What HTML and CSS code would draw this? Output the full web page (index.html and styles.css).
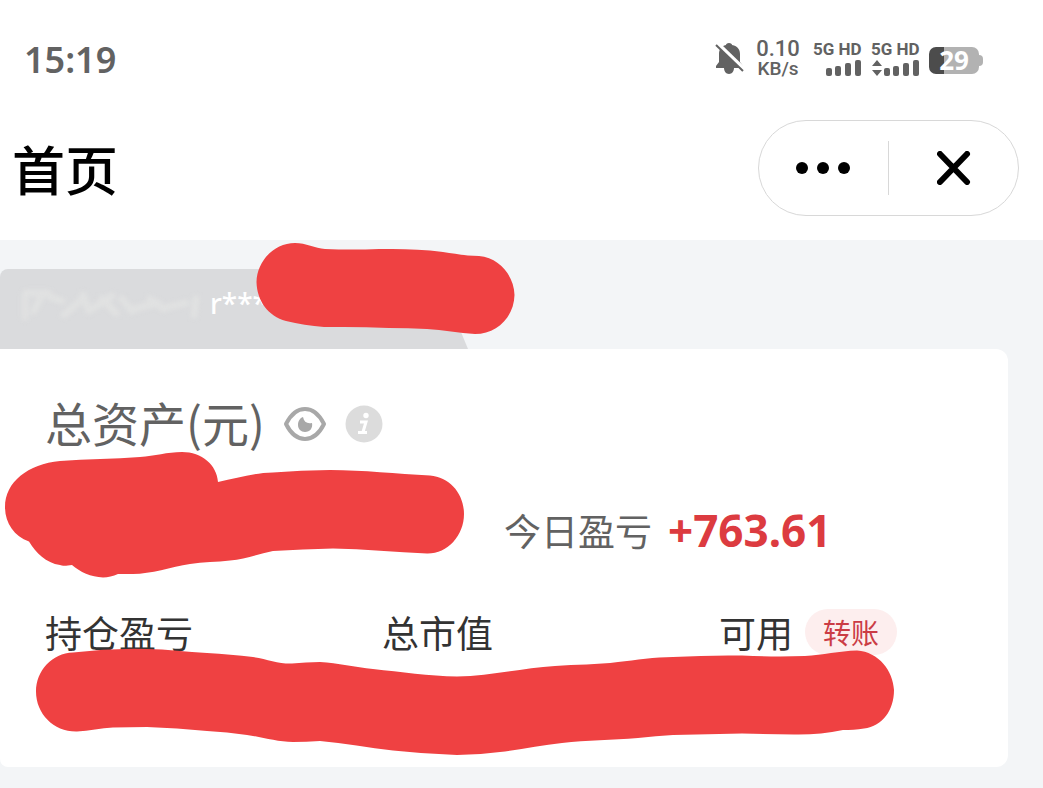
FILE: index.html
```html
<!DOCTYPE html>
<html lang="zh-CN">
<head>
<meta charset="utf-8">
<meta name="viewport" content="width=device-width, initial-scale=1">
<title>首页</title>
<link rel="stylesheet" href="styles.css">
</head>
<body>
<div class="status">
  <time class="clock">15:19</time>
  <div class="indicators">
    <svg class="bell" viewBox="0 0 30 32" aria-hidden="true">
      <path d="M14 0c2 0 3 1 3 2 6 1 8 5 8 9v8l3 4v2H19c0 3-2 6-5 6s-5-3-5-6H1v-2l3-4v-8c0-4 2-8 7-9 0-1 1-2 3-2z" fill="#626262"/>
      <path d="M1 -1l29 28" stroke="#fff" stroke-width="4"/>
      <path d="M1 2l27 26" stroke="#626262" stroke-width="2"/>
    </svg>
    <div class="speed"><span class="speed-value">0.10</span><span class="speed-unit">KB/s</span></div>
    <div class="sim">
      <span class="sim-label">5G HD</span>
      <svg class="bars" viewBox="0 0 48 18" aria-hidden="true"><g fill="#626262"><rect x="13" y="9" width="6" height="8" rx="2"/><rect x="22" y="7" width="6" height="10" rx="2"/><rect x="32" y="4" width="6" height="13" rx="2"/><rect x="42" y="1" width="6" height="16" rx="2"/></g></svg>
    </div>
    <div class="sim">
      <span class="sim-label">5G HD</span>
      <svg class="bars" viewBox="0 0 48 18" aria-hidden="true"><g fill="#626262"><path d="M6 1l5 6H1zM6 17l5-6H1z"/><rect x="13" y="9" width="6" height="8" rx="2"/><rect x="22" y="7" width="6" height="10" rx="2"/><rect x="32" y="4" width="6" height="13" rx="2"/><rect x="42" y="1" width="6" height="16" rx="2"/></g></svg>
    </div>
    <div class="battery">29</div>
  </div>
</div>

<header class="nav">
  <h1 class="page-title">首页</h1>
  <div class="capsule">
    <button class="capsule-button" type="button" aria-label="更多"><svg class="dots" viewBox="0 0 56 14"><circle cx="6" cy="7" r="6"/><circle cx="27" cy="7" r="6"/><circle cx="48" cy="7" r="6"/></svg></button>
    <button class="capsule-button" type="button" aria-label="关闭"><svg class="close" viewBox="0 0 34 34"><path d="M3 3l27 28M30 3l-27 28"/></svg></button>
  </div>
</header>

<main class="content">
  <div class="account">
    <div class="account-tab">
      <svg class="smudge" viewBox="0 0 190 44" aria-hidden="true"><g fill="none" stroke="#e0e1e1" stroke-width="7" stroke-linecap="round"><path d="M6 8h22M5 10v22M22 10l-8 16M30 12l12 4M44 30l16-14M63 10l6 16M72 24l20-13M82 14l14 14M102 14l10 12M114 24l24-6M130 14l14 10M148 22l18-4M176 14l-2 16"/></g></svg>
      <span class="account-mask">r****</span>
    </div>
    <svg class="stroke stroke-account" viewBox="250 240 270 100" aria-hidden="true"><path d="M256.500 282C257 261 274 243 295 243C306 243 315 248 325 249Q352 250 379 249C397 249 413 249 430 250.500C448 252 463 256 479 256C500 258 514 276 514.500 295C514 317 497 334 475 334C459 333 443 330 427 329Q408 328 389 328Q366 327 344 327H324C311 326 298 324 286 321C268 316 257 301 256.500 282Z"/></svg>
  </div>

  <section class="card">
    <div class="assets">
      <h2 class="assets-title">总资产(元)</h2>
      <button class="icon-button" type="button" aria-label="显示金额"><svg class="eye" viewBox="0 0 44 38"><path d="M3 19C8 9 14 4 22 4s14 5 19 15C36 29 30 34 22 34S8 29 3 19z" fill="none" stroke="#a8a8a8" stroke-width="4" stroke-linejoin="round"/><path d="M20 12c1 5 4 7 9 6 1 5-2 9-7 9-4 0-7-3-7-7s2-7 5-8z" fill="#a8a8a8"/></svg></button>
      <button class="icon-button" type="button" aria-label="说明"><svg class="info" viewBox="0 0 38 38"><circle cx="19" cy="19" r="18.500" fill="#dcdcdc"/><circle cx="21" cy="10.500" r="2.700" fill="#fff"/><path d="M15 17h6l-3 10M13 27.500h9" fill="none" stroke="#fff" stroke-width="3"/></svg></button>
    </div>
    <div class="today">
      <span class="today-label">今日盈亏</span>
      <span class="today-value">+763.61</span>
    </div>
    <div class="holdings">
      <span>持仓盈亏</span>
      <span>总市值</span>
      <div class="available"><span>可用</span><button class="transfer" type="button">转账</button></div>
    </div>
    <svg class="stroke stroke-assets" viewBox="0 445 470 140" aria-hidden="true"><path d="M5 507C5 482 28 464 60 461C87 459 114 459 140 457C155 456 167 452 182 452C202 452 217 465 218 482C237 478 253 473 273 472.500Q301 470 330 470C364 470 396 474 430 475.500C450 477 464 494 464 514C464 536 447 554 427 553.500C396 552 364 549 333 548.500Q303 549 273 551C258 554 245 559 230 560.500C217 562 203 562 190 564C171 567 151 574 133 574H118C113 576 108 577.500 103 577.500C91 577 80 572 72 565C66 566 62 566 60 565C46 563 36 553 29 541.500C14 536 5 523 5 507Z"/></svg>
    <svg class="stroke stroke-holdings" viewBox="30 645 870 115" aria-hidden="true"><path d="M36 691.500C36 671 52 653 73 652.500Q110 648 147 649C167 649 187 652 207 653C223 654 238 655 253 657C267 659 279 664 292 663.500Q306 662 320 662C338 663 355 667 373 669C401 672 429 676 457 676.500C491 676 522 668 555 666C576 664 597 665 618 662C636 660 655 657 673 657Q708 655 742 655.500Q774 657 805 656C823 655 839 651 857 650.500C879 652 893 671 894 690C894 710 883 726 864 728.500C857 730 850 730 843 730Q819 735 794 734.500Q768 734 742 733.500Q708 734 673 735Q656 736 638 738C612 740 587 740 562 743C541 745 521 750 500 752Q478 755 457 755Q425 754 393 750.500C369 748 344 743 320 741Q306 742 293 742C277 742 262 737 247 735Q227 732 207 731Q177 728 147 727Q130 727 113 727.500C101 728 89 731 77 731.500C54 732 36 714 36 691.500Z"/></svg>
  </section>
</main>
</body>
</html>
```
FILE: styles.css
```css
* {
  box-sizing: border-box;
}

body {
  margin: 0;
  min-height: 100vh;
  display: flex;
  flex-direction: column;
  background: #fff;
  color: #333;
  font-family: "Noto Sans CJK SC", sans-serif;
}

svg {
  display: block;
}

button {
  margin: 0;
  padding: 0;
  border: 0;
  background: none;
  font: inherit;
  color: inherit;
}

.status {
  display: flex;
  align-items: center;
  justify-content: space-between;
  height: 120px;
  padding: 0 60px 2px 24px;
  color: #626262;
  font-family: Roboto, sans-serif;
  font-weight: 600;
}

.clock {
  font-family: "Noto Sans", sans-serif;
  font-size: 36px;
}

.indicators {
  display: flex;
  align-items: center;
  gap: 10px;
}

.bell {
  width: 30px;
  height: 32px;
}

.speed {
  display: flex;
  flex-direction: column;
  width: 46px;
  margin-right: 2px;
  text-align: center;
}

.speed-value {
  font-size: 22px;
  line-height: 20px;
  font-weight: 500;
}

.speed-unit {
  font-size: 19px;
  line-height: 20px;
  font-weight: 500;
}

.sim {
  display: flex;
  flex-direction: column;
  gap: 2px;
  width: 48px;
}

.sim-label {
  font-size: 17px;
  line-height: 16px;
  font-weight: 700;
  white-space: nowrap;
}

.bars {
  width: 48px;
  height: 18px;
}

.battery {
  position: relative;
  width: 50px;
  height: 27px;
  margin: 2px 4px 0 0;
  border-radius: 7px;
  background: linear-gradient(to right, #4c4c4c 15px, #b2b2b2 15px);
  color: #fff;
  font-family: "Noto Sans", sans-serif;
  font-size: 26px;
  font-weight: 700;
  line-height: 27px;
  text-align: center;
}

.battery::after {
  content: "";
  position: absolute;
  top: 8px;
  right: -4px;
  width: 4px;
  height: 11px;
  border-radius: 0 4px 4px 0;
  background: #b2b2b2;
}

.nav {
  display: flex;
  align-items: center;
  justify-content: space-between;
  padding: 0 24px 24px 12px;
}

.page-title {
  margin: 0;
  color: #000;
  font-size: 53px;
  font-weight: 500;
  line-height: 80px;
}

.capsule {
  display: flex;
  align-items: center;
  width: 261px;
  height: 96px;
  border: 1px solid #d8d8d8;
  border-radius: 48px;
}

.capsule-button {
  flex: 1;
  display: flex;
  align-items: center;
  justify-content: center;
  height: 54px;
}

.capsule-button + .capsule-button {
  border-left: 1px solid #d8d8d8;
}

.dots {
  width: 56px;
  height: 14px;
}

.close {
  width: 34px;
  height: 34px;
  fill: none;
  stroke: #000;
  stroke-width: 6;
  stroke-linecap: round;
}

.content {
  flex: 1;
  padding: 29px 35px 21px 0;
  background: #f3f5f7;
}

.account {
  position: relative;
}

.account-tab {
  display: flex;
  align-items: flex-start;
  width: 468px;
  height: 80px;
  padding: 16px 20px;
  border-top-left-radius: 8px;
  background: #dadbdd;
  clip-path: polygon(0 0, 435px 0, 100% 100%, 0 100%);
}

.smudge {
  width: 190px;
  height: 44px;
  filter: blur(2px);
}

.account-mask {
  color: #fff;
  font-family: "Noto Sans", sans-serif;
  font-size: 28px;
  font-weight: 500;
  line-height: 36px;
}

.card {
  position: relative;
  padding: 38px 0 107px 45px;
  border-radius: 0 12px 12px 8px;
  background: #fff;
}

.assets {
  display: flex;
  align-items: center;
  gap: 18px;
}

.assets-title {
  margin: 0;
  color: #626262;
  font-size: 47px;
  font-weight: 400;
  line-height: 70px;
}

.icon-button {
  padding-top: 4px;
}

.eye {
  width: 44px;
  height: 38px;
}

.info {
  width: 38px;
  height: 38px;
}

.today {
  display: flex;
  align-items: center;
  gap: 16px;
  padding: 43px 0 44px 459px;
  line-height: 60px;
}

.today-label {
  color: #626262;
  font-size: 37px;
}

.today-value {
  color: #dc3b40;
  font-family: "Noto Sans", sans-serif;
  font-size: 44px;
  font-weight: 700;
}

.holdings {
  display: grid;
  grid-template-columns: 35fr 35fr 30fr;
  align-items: center;
  font-size: 37px;
  line-height: 56px;
}

.available {
  display: flex;
  align-items: center;
  gap: 12px;
}

.transfer {
  width: 92px;
  height: 46px;
  border-radius: 23px;
  background: #fdeeee;
  color: #cb3c45;
  font-size: 28px;
  line-height: 46px;
}

.stroke {
  position: absolute;
  fill: #ef4142;
  pointer-events: none;
}

.stroke-account {
  left: 250px;
  top: -29px;
  width: 270px;
  height: 100px;
}

.stroke-assets {
  left: 0;
  top: 96px;
  width: 470px;
  height: 140px;
}

.stroke-holdings {
  left: 30px;
  top: 296px;
  width: 870px;
  height: 115px;
}
```
